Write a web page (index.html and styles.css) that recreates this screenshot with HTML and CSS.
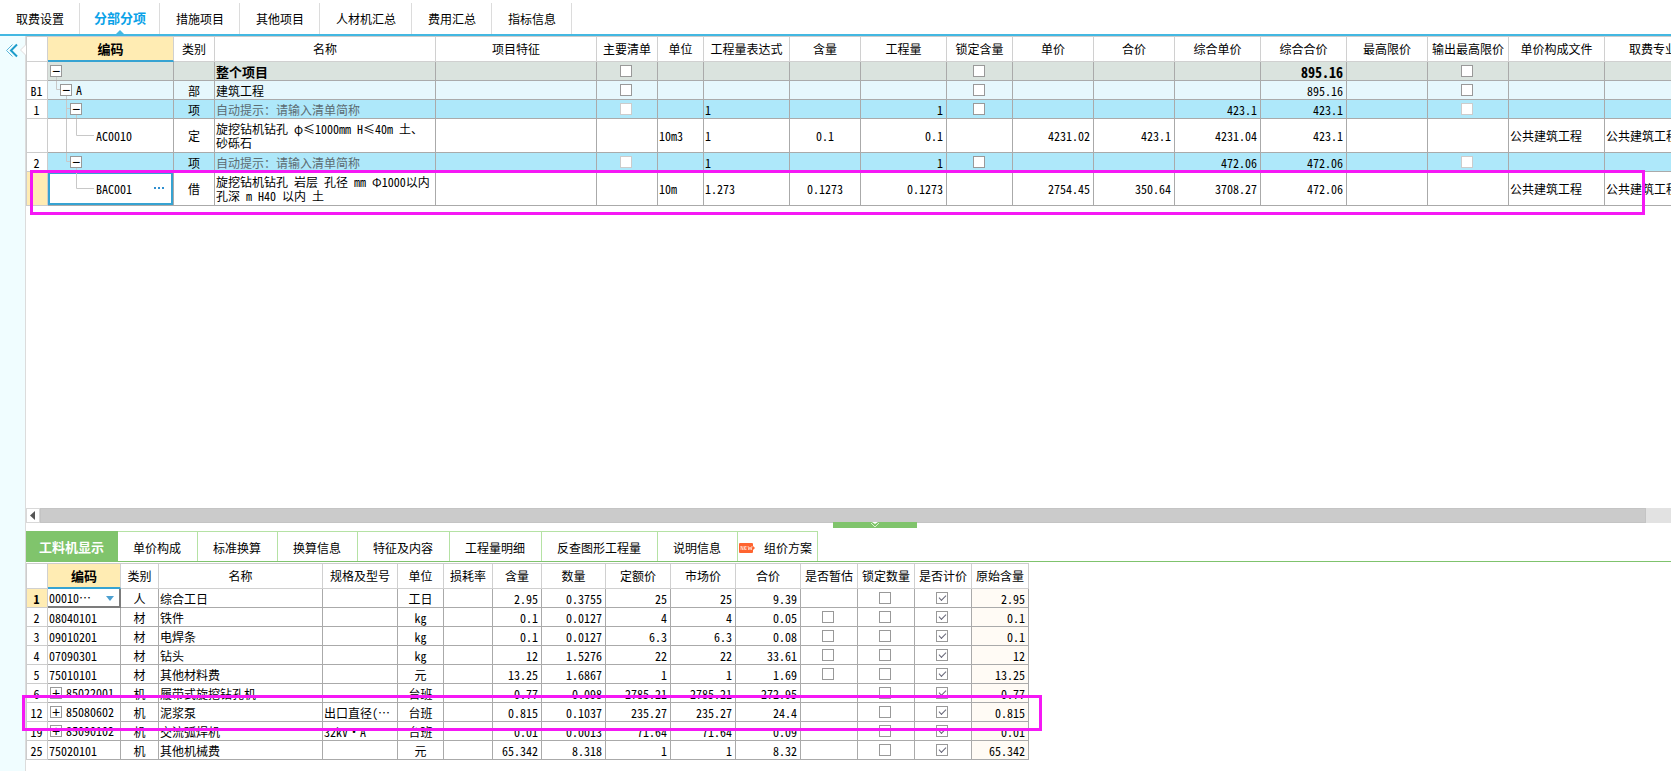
FILE: index.html
```html
<!DOCTYPE html>
<html lang="zh-CN">
<head>
<meta charset="utf-8">
<title>分部分项</title>
<link rel="stylesheet" href="styles.css">
</head>
<body>
<nav class="tabs">
<button class="tab">取费设置</button>
<button class="tab tab-on">分部分项</button>
<button class="tab">措施项目</button>
<button class="tab">其他项目</button>
<button class="tab">人材机汇总</button>
<button class="tab">费用汇总</button>
<button class="tab">指标信息</button>
</nav>
<div class="body">
<aside class="side">
<button class="expand" aria-label="展开"><svg width="26" height="22" viewBox="0 0 26 22"><path d="M26 3v2l-6 6 6 6v2z" fill="#fff"/><path d="M25.500 3v3l-5 5 5 5v3" fill="none" stroke="#dcdcdc"/><path d="M12.500 5.500l-6 6 6 6" fill="none" stroke="#5bb5da"/><path d="M17 5.500l-6 6 6 6" fill="none" stroke="#1c9ccb" stroke-width="2"/></svg></button>
</aside>
<main class="main">
<section class="upper">
<div class="scroller">
<table class="grid bill">
<colgroup><col class="w21"><col class="w126"><col class="w41"><col class="w221"><col class="w161"><col class="w61"><col class="w46"><col class="w86"><col class="w71"><col class="w86"><col class="w66"><col class="w81"><col class="w81"><col class="w86"><col class="w86"><col class="w81"><col class="w81"><col class="w96"><col class="w97"></colgroup>
<thead><tr><th></th><th class="key">编码</th><th>类别</th><th>名称</th><th>项目特征</th><th>主要清单</th><th>单位</th><th>工程量表达式</th><th>含量</th><th>工程量</th><th>锁定含量</th><th>单价</th><th>合价</th><th>综合单价</th><th>综合合价</th><th>最高限价</th><th>输出最高限价</th><th>单价构成文件</th><th>取费专业</th></tr></thead>
<tbody>
<tr class="total"><td class="no"></td><td class="code"><svg class="guide" width="100" height="18"><path d="M8.500 15V18"/></svg><div class="node"><button class="toggle" aria-label="折叠">−</button></div></td><td></td><td>整个项目</td><td></td><td class="c"><input type="checkbox" aria-label="主要清单"></td><td></td><td></td><td></td><td></td><td class="c"><input type="checkbox" aria-label="锁定含量"></td><td></td><td></td><td></td><td class="r sum">895.16</td><td></td><td class="c"><input type="checkbox" aria-label="输出最高限价"></td><td></td><td></td></tr>
<tr class="part"><td class="no">B1</td><td class="code"><svg class="guide" width="100" height="18"><path d="M8.500 0V8.500H12M18.500 15V18"/></svg><div class="node level1"><button class="toggle" aria-label="折叠">−</button>A</div></td><td class="c">部</td><td>建筑工程</td><td></td><td class="c"><input type="checkbox" aria-label="主要清单"></td><td></td><td></td><td></td><td></td><td class="c"><input type="checkbox" aria-label="锁定含量"></td><td></td><td></td><td></td><td class="r">895.16</td><td></td><td class="c"><input type="checkbox" aria-label="输出最高限价"></td><td></td><td></td></tr>
<tr class="item"><td class="no">1</td><td class="code"><svg class="guide" width="100" height="18"><path d="M18.500 0V18M18.500 8.500H22M28.500 15V18"/></svg><div class="node level2"><button class="toggle" aria-label="折叠">−</button></div></td><td class="c">项</td><td class="hint">自动提示：请输入清单简称</td><td></td><td class="c"><input type="checkbox" disabled aria-label="主要清单"></td><td></td><td>1</td><td></td><td class="r">1</td><td class="c"><input type="checkbox" aria-label="锁定含量"></td><td></td><td></td><td class="r">423.1</td><td class="r">423.1</td><td></td><td class="c"><input type="checkbox" disabled aria-label="输出最高限价"></td><td></td><td></td></tr>
<tr class="quota"><td class="no"></td><td class="code"><svg class="guide" width="100" height="33"><path d="M18.500 0V33M28.500 0V16.500H46"/></svg><div class="node leaf">AC0010</div></td><td class="c">定</td><td class="desc">旋挖钻机钻孔 φ≤1000mm H≤40m 土、<br>砂砾石</td><td></td><td></td><td>10m3</td><td>1</td><td class="c">0.1</td><td class="r">0.1</td><td></td><td class="r">4231.02</td><td class="r">423.1</td><td class="r">4231.04</td><td class="r">423.1</td><td></td><td></td><td>公共建筑工程</td><td>公共建筑工程</td></tr>
<tr class="item"><td class="no">2</td><td class="code"><svg class="guide" width="100" height="18"><path d="M18.500 0V8.500H22M28.500 15V18"/></svg><div class="node level2"><button class="toggle" aria-label="折叠">−</button></div></td><td class="c">项</td><td class="hint">自动提示：请输入清单简称</td><td></td><td class="c"><input type="checkbox" disabled aria-label="主要清单"></td><td></td><td>1</td><td></td><td class="r">1</td><td class="c"><input type="checkbox" aria-label="锁定含量"></td><td></td><td></td><td class="r">472.06</td><td class="r">472.06</td><td></td><td class="c"><input type="checkbox" disabled aria-label="输出最高限价"></td><td></td><td></td></tr>
<tr class="quota"><td class="no no-on"></td><td class="code code-on"><svg class="guide" width="100" height="33"><path d="M28.500 0V16.500H46"/></svg><div class="node leaf">BAC001<button class="more" aria-label="更多"><svg width="11" height="3"><path d="M0 0h2v2h-2zM4 0h2v2h-2zM8 0h2v2h-2z" fill="#2f8fd0"/></svg></button></div></td><td class="c">借</td><td class="desc">旋挖钻机钻孔 岩层 孔径 mm Φ1000以内<br>孔深 m H40 以内 土</td><td></td><td></td><td>10m</td><td>1.273</td><td class="c">0.1273</td><td class="r">0.1273</td><td></td><td class="r">2754.45</td><td class="r">350.64</td><td class="r">3708.27</td><td class="r">472.06</td><td></td><td></td><td>公共建筑工程</td><td>公共建筑工程</td></tr>
</tbody>
</table>
</div>
<div class="mark mark-top"></div>
<div class="hbar"><button class="hbar-left" aria-label="向左滚动"><svg width="12" height="13"><path d="M8 2v9L3 6.500z" fill="#555"/></svg></button><div class="hbar-thumb"></div></div>
</section>
<section class="lower">
<button class="splitter" aria-label="收起"><svg width="10" height="6"><path d="M2 0h6L5 2z" fill="#fff"/><path d="M1 1l4 4 4-4" fill="none" stroke="#d9f0d0"/></svg></button>
<div class="subtabs">
<button class="subtab subtab-on">工料机显示</button>
<button class="subtab">单价构成</button>
<button class="subtab">标准换算</button>
<button class="subtab">换算信息</button>
<button class="subtab">特征及内容</button>
<button class="subtab">工程量明细</button>
<button class="subtab">反查图形工程量</button>
<button class="subtab">说明信息</button>
<button class="subtab subtab-new"><svg width="16" height="10"><path d="M1 0h12q1 0 1 1v2l2 2-2 2v2q0 1-1 1H1q-1 0-1-1V1q0-1 1-1z" fill="#ff6430"/><path d="M2 7V3l2 4V3M7.500 3.500h-2v3h2M5.500 5h2M9 3l.8 4L11 4l1.200 3L13 3" fill="none" stroke="#ffe3d8" stroke-width=".8"/></svg>组价方案</button>
</div>
<table class="grid res">
<colgroup><col class="w21"><col class="w73"><col class="w38"><col class="w164"><col class="w75"><col class="w46"><col class="w49"><col class="w49"><col class="w64"><col class="w65"><col class="w65"><col class="w65"><col class="w57"><col class="w57"><col class="w57"><col class="w57"></colgroup>
<thead><tr><th></th><th class="key">编码</th><th>类别</th><th>名称</th><th>规格及型号</th><th>单位</th><th>损耗率</th><th>含量</th><th>数量</th><th>定额价</th><th>市场价</th><th>合价</th><th>是否暂估</th><th>锁定数量</th><th>是否计价</th><th>原始含量</th></tr></thead>
<tbody>
<tr><td class="no no-on">1</td><td class="pick"><select aria-label="编码"><option>00010…</option></select></td><td class="c">人</td><td>综合工日</td><td></td><td class="c">工日</td><td></td><td class="r">2.95</td><td class="r">0.3755</td><td class="r">25</td><td class="r">25</td><td class="r">9.39</td><td></td><td class="c"><input type="checkbox" aria-label="锁定数量"></td><td class="c"><input type="checkbox" checked aria-label="是否计价"></td><td class="r orig">2.95</td></tr>
<tr><td class="no">2</td><td>08040101</td><td class="c">材</td><td>铁件</td><td></td><td class="c">kg</td><td></td><td class="r">0.1</td><td class="r">0.0127</td><td class="r">4</td><td class="r">4</td><td class="r">0.05</td><td class="c"><input type="checkbox" aria-label="是否暂估"></td><td class="c"><input type="checkbox" aria-label="锁定数量"></td><td class="c"><input type="checkbox" checked aria-label="是否计价"></td><td class="r orig">0.1</td></tr>
<tr><td class="no">3</td><td>09010201</td><td class="c">材</td><td>电焊条</td><td></td><td class="c">kg</td><td></td><td class="r">0.1</td><td class="r">0.0127</td><td class="r">6.3</td><td class="r">6.3</td><td class="r">0.08</td><td class="c"><input type="checkbox" aria-label="是否暂估"></td><td class="c"><input type="checkbox" aria-label="锁定数量"></td><td class="c"><input type="checkbox" checked aria-label="是否计价"></td><td class="r orig">0.1</td></tr>
<tr><td class="no">4</td><td>07090301</td><td class="c">材</td><td>钻头</td><td></td><td class="c">kg</td><td></td><td class="r">12</td><td class="r">1.5276</td><td class="r">22</td><td class="r">22</td><td class="r">33.61</td><td class="c"><input type="checkbox" aria-label="是否暂估"></td><td class="c"><input type="checkbox" aria-label="锁定数量"></td><td class="c"><input type="checkbox" checked aria-label="是否计价"></td><td class="r orig">12</td></tr>
<tr><td class="no">5</td><td>75010101</td><td class="c">材</td><td>其他材料费</td><td></td><td class="c">元</td><td></td><td class="r">13.25</td><td class="r">1.6867</td><td class="r">1</td><td class="r">1</td><td class="r">1.69</td><td class="c"><input type="checkbox" aria-label="是否暂估"></td><td class="c"><input type="checkbox" aria-label="锁定数量"></td><td class="c"><input type="checkbox" checked aria-label="是否计价"></td><td class="r orig">13.25</td></tr>
<tr><td class="no">6</td><td class="code"><div class="node"><button class="toggle" aria-label="展开">+</button>85022001</div></td><td class="c">机</td><td>履带式旋挖钻孔机</td><td></td><td class="c">台班</td><td></td><td class="r">0.77</td><td class="r">0.098</td><td class="r">2785.21</td><td class="r">2785.21</td><td class="r">272.95</td><td></td><td class="c"><input type="checkbox" aria-label="锁定数量"></td><td class="c"><input type="checkbox" checked aria-label="是否计价"></td><td class="r orig">0.77</td></tr>
<tr><td class="no">12</td><td class="code"><div class="node"><button class="toggle" aria-label="展开">+</button>85080602</div></td><td class="c">机</td><td>泥浆泵</td><td>出口直径(…</td><td class="c">台班</td><td></td><td class="r">0.815</td><td class="r">0.1037</td><td class="r">235.27</td><td class="r">235.27</td><td class="r">24.4</td><td></td><td class="c"><input type="checkbox" aria-label="锁定数量"></td><td class="c"><input type="checkbox" checked aria-label="是否计价"></td><td class="r orig">0.815</td></tr>
<tr><td class="no">19</td><td class="code"><div class="node"><button class="toggle" aria-label="展开">+</button>85090102</div></td><td class="c">机</td><td>交流弧焊机</td><td>32kV·A</td><td class="c">台班</td><td></td><td class="r">0.01</td><td class="r">0.0013</td><td class="r">71.64</td><td class="r">71.64</td><td class="r">0.09</td><td></td><td class="c"><input type="checkbox" aria-label="锁定数量"></td><td class="c"><input type="checkbox" checked aria-label="是否计价"></td><td class="r orig">0.01</td></tr>
<tr><td class="no">25</td><td>75020101</td><td class="c">机</td><td>其他机械费</td><td></td><td class="c">元</td><td></td><td class="r">65.342</td><td class="r">8.318</td><td class="r">1</td><td class="r">1</td><td class="r">8.32</td><td></td><td class="c"><input type="checkbox" aria-label="锁定数量"></td><td class="c"><input type="checkbox" checked aria-label="是否计价"></td><td class="r orig">65.342</td></tr>
</tbody>
</table>
<div class="mark mark-bottom"></div>
</section>
</main>
</div>
</body>
</html>
```
FILE: styles.css
```css
* { box-sizing: border-box; }

body {
  margin: 0;
  min-height: 100vh;
  display: flex;
  flex-direction: column;
  overflow: hidden;
  background: #fff;
  color: #000;
  font: 12px/14px "Noto Sans Mono CJK SC", "Noto Sans CJK SC", "Liberation Mono", monospace;
}

button, select, input { font: inherit; color: inherit; margin: 0; padding: 0; border: 0; background: none; }
svg { display: block; }

.tabs { display: flex; padding-top: 3px; height: 36px; border-bottom: 2px solid #43b8e2; }
.tab { padding: 1px 15px 0 16px; border-right: 1px solid #dcdcdc; white-space: nowrap; }
.tab-on { position: relative; padding: 0 13px 2px 14px; font-size: 13px; font-weight: bold; color: #0aa2e8; }
.tab-on::after {
  content: "";
  position: absolute;
  left: 50%;
  bottom: 0;
  margin-left: -4px;
  border: 4px solid transparent;
  border-top: 0;
  border-bottom-color: #43b8e2;
}

.body { flex: 1; display: flex; }
.side { flex: none; width: 26px; background: #f0fdff; border-right: 1px solid #dcdcdc; }
.expand { display: block; margin-top: 3px; width: 26px; }
.main { flex: 1; min-width: 0; display: flex; flex-direction: column; }

.upper { position: relative; flex: 1; display: flex; flex-direction: column; }
.scroller { flex: 1; overflow: hidden; }

.grid { table-layout: fixed; width: 0; border-collapse: separate; border-spacing: 0; border-left: 1px solid #ccc; border-top: 1px solid #ccc; }
.grid th, .grid td { padding: 1px 3px 0 1px; border-right: 1px solid #aaa; border-bottom: 1px solid #aaa; white-space: nowrap; overflow: hidden; text-align: left; }
.grid th { height: 25px; padding: 0; text-align: center; font-weight: normal; border-color: #d0d0d0; }
.grid td { height: 19px; }
.grid .key { background: #ffecb3; font-size: 13px; font-weight: bold; border-bottom: 2px solid #36a3d2; }
.grid .no { padding: 1px 1px 0 0; text-align: center; background: #fff; border-color: #ccc; font-weight: normal; }
.grid .no-on { background: #ffecb3; font-weight: bold; }
.grid .c { padding: 1px 0 0; text-align: center; }
.grid .r { text-align: right; }
.grid .orig { background: #fffbf5; }

.total td { background: #dae3de; font-weight: bold; font-size: 13px; }
.total .sum { font-size: 14px; }
.part td { background: #e6f7fc; }
.item td { background: #aee8fa; }
.grid .hint { color: #5c6c72; }
.grid .quota td { height: 34px; }

.grid .code { position: relative; padding: 0; }
.guide { position: absolute; left: 0; top: 0; fill: none; stroke: #c8c8c8; }
.node { position: relative; display: flex; align-items: center; gap: 4px; padding-left: 2px; }
.level1 { padding-left: 12px; }
.level2 { padding-left: 22px; }
.leaf { padding-left: 48px; }
.toggle { flex: none; width: 12px; height: 12px; border: 1px solid #999; background: #fff; font: 14px/8px "Liberation Sans", sans-serif; }
.more { margin-left: auto; padding-right: 8px; }
.code-on { box-shadow: inset 0 0 0 2px #36a3d2; }

input[type="checkbox"] { appearance: none; display: block; position: relative; width: 12px; height: 12px; margin: 0 0 2px calc(50% - 7px); border: 1px solid #999; background: #fff; }
input[type="checkbox"]:disabled { border-color: #ccc; }
input[type="checkbox"]:checked::before { content: ""; position: absolute; left: 2px; top: 2px; width: 6px; height: 3px; border: 1px solid #667; border-width: 0 0 1px 1px; transform: rotate(-45deg); }

.grid .pick { position: relative; padding: 0; border-right: 2px solid #7c7c7c; border-bottom: 2px solid #7c7c7c; }
.pick select { display: block; appearance: none; width: 100%; height: 17px; padding: 1px 0 0 1px; }
.pick::after { content: ""; position: absolute; right: 5px; top: 7px; border: 4px solid transparent; border-top: 5px solid #4b9fd0; border-bottom: 0; pointer-events: none; }

.hbar { display: flex; height: 15px; background: #e2e2e2; }
.hbar-left { width: 14px; background: #fff; border: 1px solid #d8d8d8; }
.hbar-thumb { flex: 1; margin-right: 25px; border: 1px solid #c4c4c4; background: #cbcbcb; }

.lower { position: relative; padding-bottom: 11px; }
.splitter { position: absolute; left: 807px; top: -1px; width: 84px; height: 6px; display: flex; justify-content: center; background: #80c46c; }
.subtabs { display: flex; height: 31px; margin: 8px 0 1px; border-bottom: 1px solid #7fc36d; }
.subtab { padding: 2px 16px 0 15px; border-right: 1px solid #b5e2a4; border-top: 1px solid #b5e2a4; white-space: nowrap; }
.subtab-on { width: 92px; padding: 0; border-color: #80c46c; background: #80c46c; color: #fff; font-size: 13px; font-weight: bold; }
.subtab-new { display: flex; align-items: center; gap: 9px; padding: 2px 5px 0 1px; }

.mark { position: absolute; border: 3px solid #f518f5; pointer-events: none; }
.mark-top { left: 4px; right: 26px; top: 134px; height: 45px; }
.mark-bottom { left: -4px; width: 1020px; top: 172px; height: 36px; }

.w21 { width: 21px; } .w38 { width: 38px; } .w41 { width: 41px; } .w46 { width: 46px; }
.w49 { width: 49px; } .w57 { width: 57px; } .w61 { width: 61px; } .w64 { width: 64px; }
.w65 { width: 65px; } .w66 { width: 66px; } .w71 { width: 71px; } .w73 { width: 73px; }
.w75 { width: 75px; } .w81 { width: 81px; } .w86 { width: 86px; } .w96 { width: 96px; }
.w97 { width: 97px; } .w126 { width: 126px; } .w161 { width: 161px; } .w164 { width: 164px; }
.w221 { width: 221px; }
```
